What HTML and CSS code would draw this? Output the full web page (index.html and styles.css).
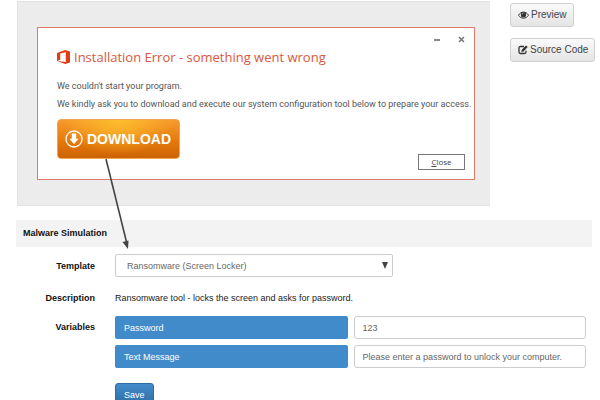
FILE: index.html
```html
<!DOCTYPE html>
<html lang="en">
<head>
    <meta charset="UTF-8">
    <meta name="viewport" content="width=device-width, initial-scale=1.0">
    <link rel="stylesheet" href="styles.css">
    <title>Malware Simulation</title>
</head>
<body>
    <div class="editor">
        <div class="preview">
            <div class="dialog">
                <div class="window-buttons">
                    <button type="button" aria-label="Minimize">
                        <svg width="7" height="7" viewBox="0 0 7 7"><path d="M0 4h6" stroke="#888" stroke-width="2"/></svg>
                    </button>
                    <button type="button" aria-label="Close window">
                        <svg width="7" height="7" viewBox="0 0 7 7"><path d="M1 1l5 5M6 1l-5 5" stroke="#777" stroke-width="1.6"/></svg>
                    </button>
                </div>
                <h1>
                    <svg width="13" height="14" viewBox="0 0 13 14"><path d="M0 3 8.2 0 13 1.400v11.200L8.200 14 0 11.100l8.800 .8V2.300L3.200 3.600v6.200L0 11.100z" fill="#e43c12"/></svg>
                    <span>Installation Error - something went wrong</span>
                </h1>
                <p>We couldn't start your program.</p>
                <p>We kindly ask you to download and execute our system configuration tool below to prepare your access.</p>
                <div class="dialog-actions">
                    <button type="button" class="download">
                        <svg width="18" height="18" viewBox="0 0 18 18"><circle cx="9" cy="9" r="8" fill="none" stroke="#fff" stroke-width="1.3"/><path d="M6.8 3.5h4.4v5.3h2.3L9 14.3 4.5 8.8h2.3z" fill="#fff"/></svg>
                        <span>DOWNLOAD</span>
                    </button>
                    <button type="button" class="close"><u>C</u>lose</button>
                </div>
            </div>
            <svg class="arrow" width="28" height="94" viewBox="0 0 28 94"><path d="M2 1 22.500 84" stroke="#444" stroke-width="1.6"/><path d="M24 91l-5.500-7 6-1.500z" fill="#444"/></svg>
        </div>
        <div class="tools">
            <button type="button" class="btn">
                <svg width="11" height="10" viewBox="0 0 11 10"><path d="M.5 5.200C3 1 8 1 10.500 5.200 8 9.200 3 9.200.5 5.200z" fill="#fff" stroke="#333"/><circle cx="5.500" cy="4.700" r="2.700" fill="#333"/><path d="M4.300 4.300q.1-1.200 1.200-1.300" fill="none" stroke="#fff" stroke-width=".6"/></svg>
                <span>Preview</span>
            </button>
            <button type="button" class="btn">
                <svg width="10" height="10" viewBox="0 0 10 10"><path d="M6 1.500H2.500Q1 1.500 1 3v4q0 1.500 1.500 1.500h4Q8 8.500 8 7V5.800" fill="none" stroke="#333" stroke-width="1.300"/><path d="M3.300 6.900l.5-2.200L8 .4l1.700 1.700-4.200 4.300z" fill="#333"/></svg>
                <span>Source Code</span>
            </button>
        </div>
    </div>

    <form class="simulation">
        <h2>Malware Simulation</h2>
        <div class="row template-row">
            <label for="template">Template</label>
            <div class="select-wrap">
                <select id="template">
                    <option>Ransomware (Screen Locker)</option>
                </select>
                <svg class="caret" width="6" height="7" viewBox="0 0 6 7"><path d="M0 0h6L3 7z" fill="#444"/></svg>
            </div>
        </div>
        <div class="row description-row">
            <span class="row-title">Description</span>
            <p>Ransomware tool - locks the screen and asks for password.</p>
        </div>
        <div class="row variables-row">
            <span class="row-title">Variables</span>
            <div class="variables">
                <label for="password">Password</label>
                <input type="text" id="password" value="123">
                <label for="message">Text Message</label>
                <input type="text" id="message" value="Please enter a password to unlock your computer.">
            </div>
        </div>
        <div class="save-row">
            <button type="button" class="save">Save</button>
        </div>
    </form>
</body>
</html>
```
FILE: styles.css
```css
* {
    box-sizing: border-box;
}

body {
    margin: 0;
    padding: 1px 8px 0 16px;
    background-color: #fff;
    color: #222;
    font-family: "Liberation Sans", Arial, sans-serif;
    font-size: 9px;
    line-height: 12px;
}

button, input, select {
    font-family: inherit;
    font-size: inherit;
    line-height: inherit;
}

h1, h2, p {
    margin: 0;
}

.editor {
    display: grid;
    grid-template-columns: minmax(0, 1fr) 82px;
    column-gap: 20px;
}

.preview {
    position: relative;
    padding: 25px 15px 25px 19px;
    margin-left: 1px;
    background-color: #ececec;
    border: 1px solid #e2e2e2;
    border-right: none;
}

.dialog {
    padding: 8px 9px 9px 19px;
    background-color: #fff;
    border: 1px solid #dd7a6a;
    color: #555;
    font-family: Roboto, "Open Sans", sans-serif;
}

.window-buttons {
    display: flex;
    justify-content: flex-end;
    gap: 17px;
    height: 12px;
}

.window-buttons button {
    display: flex;
    padding: 0;
    border: none;
    background: none;
}

.dialog h1 {
    display: flex;
    align-items: center;
    gap: 4px;
    margin-bottom: 14px;
    color: #d9573b;
    font-family: "Open Sans", "Noto Sans", sans-serif;
    font-size: 13px;
    font-weight: 400;
    line-height: 18px;
    white-space: nowrap;
}

.dialog p {
    margin-bottom: 6px;
    white-space: nowrap;
}

.dialog-actions {
    display: flex;
    justify-content: space-between;
    align-items: flex-start;
    padding-top: 3px;
}

.download {
    display: flex;
    align-items: center;
    gap: 4px;
    height: 40px;
    padding: 0 8px 0 7px;
    border: 1px solid #f0a850;
    border-radius: 4px;
    background: radial-gradient(ellipse at 50% 0, #fdbd2c 0, rgba(250, 160, 30, 0) 65%), linear-gradient(#f79a2e, #e67a0c 55%, #cc6205);
    color: #fff;
    font-family: "Liberation Sans", Arial, sans-serif;
    font-size: 14px;
    font-weight: 700;
}

.close {
    width: 47px;
    height: 16px;
    margin-top: 35px;
    padding: 0;
    border: 1px solid #777;
    background-color: #fff;
    color: #444;
    font-family: "Open Sans", "Noto Sans", sans-serif;
    font-size: 8px;
}

.arrow {
    position: absolute;
    left: 86px;
    top: 156px;
}

.tools {
    display: flex;
    flex-direction: column;
    align-items: flex-start;
    gap: 11px;
    padding-top: 2px;
}

.btn {
    display: flex;
    align-items: center;
    gap: 2px;
    height: 24px;
    padding: 0 6px 0 7px;
    border: 1px solid #d0d0d0;
    border-radius: 3px;
    background: linear-gradient(#fafafa, #e4e4e4);
    color: #444;
    font-size: 10px;
    white-space: nowrap;
}

.simulation h2 {
    margin: 14px 0 7px;
    padding: 7px;
    background-color: #f3f3f3;
    color: #111;
    font-size: 9px;
    line-height: 13px;
}

.row {
    display: grid;
    grid-template-columns: 79px 1fr;
    column-gap: 20px;
    padding-right: 6px;
}

.row > label,
.row-title {
    color: #111;
    font-weight: 700;
    text-align: right;
}

.template-row {
    align-items: center;
    margin-bottom: 15px;
}

.select-wrap {
    position: relative;
    width: 59%;
}

.select-wrap select {
    display: block;
    width: 100%;
    height: 23px;
    padding: 0 11px;
    appearance: none;
    border: 1px solid #ccc;
    border-radius: 2px;
    background-color: #fff;
    color: #666;
}

.caret {
    position: absolute;
    right: 5px;
    top: 8px;
    pointer-events: none;
}

.description-row {
    margin-bottom: 12px;
}

.variables-row .row-title {
    padding-top: 5px;
}

.variables {
    display: grid;
    grid-template-columns: 1fr 1fr;
    gap: 6px;
}

.variables label {
    padding: 6px 9px 5px;
    border-radius: 2px;
    background-color: #428bca;
    color: #fff;
}

.variables input {
    width: 100%;
    height: 23px;
    padding: 0 8px;
    border: 1px solid #ccc;
    border-radius: 3px;
    color: #666;
}

.save-row {
    padding: 15px 0 0 99px;
}

.save {
    height: 24px;
    padding: 0 8px;
    border: 1px solid #2d6ca2;
    border-radius: 3px;
    background: linear-gradient(#428bca, #2d6ca2);
    color: #fff;
}
```
